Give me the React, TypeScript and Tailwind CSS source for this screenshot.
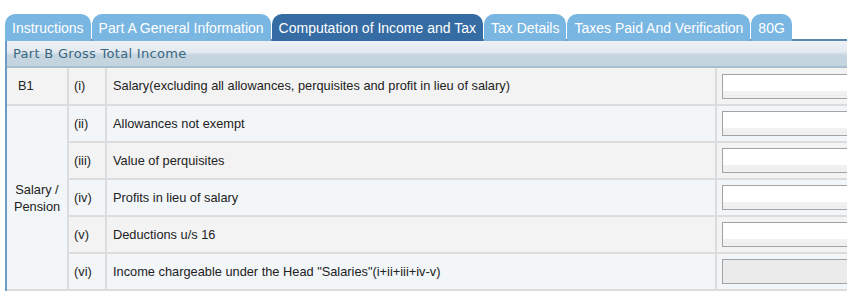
import React from 'react';

const tabs = [
  { label: 'Instructions', active: false },
  { label: 'Part A General Information', active: false },
  { label: 'Computation of Income and Tax', active: true },
  { label: 'Tax Details', active: false },
  { label: 'Taxes Paid And Verification', active: false },
  { label: '80G', active: false },
];

const rows = [
  { no: '(ii)', text: 'Allowances not exempt' },
  { no: '(iii)', text: 'Value of perquisites' },
  { no: '(iv)', text: 'Profits in lieu of salary' },
  { no: '(v)', text: 'Deductions u/s 16' },
  { no: '(vi)', text: 'Income chargeable under the Head "Salaries"(i+ii+iii+iv-v)', readOnly: true },
];

const AmountBox: React.FC<{ readOnly?: boolean }> = ({ readOnly }) => (
  <div
    className={`h-[25px] w-[140px] border border-[#a3a3a3] ${
      readOnly
        ? 'bg-[#ebebeb]'
        : 'bg-[linear-gradient(to_bottom,#ffffff_0%,#ffffff_68%,#f1f1f1_68%,#f1f1f1_85%,#e6e6e6_85%,#f1f1f1_92%)]'
    }`}
  />
);

export default function App() {
  return (
    <div className="w-[847px] h-[293px] overflow-hidden bg-white pt-[14px] pl-[5px] font-['Liberation_Sans',Arial,sans-serif]">
      {/* tab strip */}
      <div className="flex gap-[1px] h-[27px] border-b-2 border-[#5a86b2]">
        {tabs.map((t) => (
          <div
            key={t.label}
            className={`h-[27px] px-[7px] pt-[1px] rounded-t-[10px] flex items-center text-[14px] text-white whitespace-nowrap ${
              t.active ? 'bg-[#356ca3]' : 'bg-[#79b6e2]'
            }`}
          >
            {t.label}
          </div>
        ))}
      </div>

      <div className="border-l-2 border-[#6c9bc8]">
        {/* section header */}
        <div className="h-[27px] flex items-center pl-[6px] pt-[1px] border-b-2 border-[#a9bfcf] bg-[linear-gradient(to_bottom,#eef2f5_0%,#e2e9ef_45%,#c6d6e1_55%,#c4d4df_100%)] text-[13px] text-[#3a6782] tracking-[0.3px] font-['DejaVu_Sans',sans-serif]">
          Part B Gross Total Income
        </div>

        <table className="table-fixed w-[860px] border-collapse text-[12.8px] text-[#222]">
          <colgroup>
            <col className="w-[61px]" />
            <col className="w-[38px]" />
            <col className="w-[610px]" />
            <col className="w-[151px]" />
          </colgroup>
          <tbody>
            <tr className="h-[37px] bg-[#f3f3f3]">
              <td className="pl-[11px] border-r-2 border-b-2 border-[#dcdcdc]">B1</td>
              <td className="pl-[5px] border-r-2 border-b-2 border-[#dcdcdc]">(i)</td>
              <td className="pl-[6px] border-r-2 border-b-2 border-[#dcdcdc] whitespace-nowrap">
                Salary(excluding all allowances, perquisites and profit in lieu of salary)
              </td>
              <td className="pl-[5px] border-b-2 border-[#dcdcdc]">
                <AmountBox />
              </td>
            </tr>
            {rows.map((r, i) => (
              <tr key={r.no} className={`h-[37px] ${i % 2 === 0 ? 'bg-[#f2f6f9]' : 'bg-[#f3f3f3]'}`}>
                {i === 0 && (
                  <td
                    rowSpan={rows.length}
                    className="bg-[#f2f6f9] text-center leading-[17px] border-r-2 border-b-2 border-[#dcdcdc]"
                  >
                    Salary /<br />
                    Pension
                  </td>
                )}
                <td className="pl-[5px] border-r-2 border-b-2 border-[#dcdcdc]">{r.no}</td>
                <td className="pl-[6px] border-r-2 border-b-2 border-[#dcdcdc] whitespace-nowrap">{r.text}</td>
                <td className="pl-[5px] border-b-2 border-[#dcdcdc]">
                  <AmountBox readOnly={r.readOnly} />
                </td>
              </tr>
            ))}
          </tbody>
        </table>
      </div>
    </div>
  );
}
